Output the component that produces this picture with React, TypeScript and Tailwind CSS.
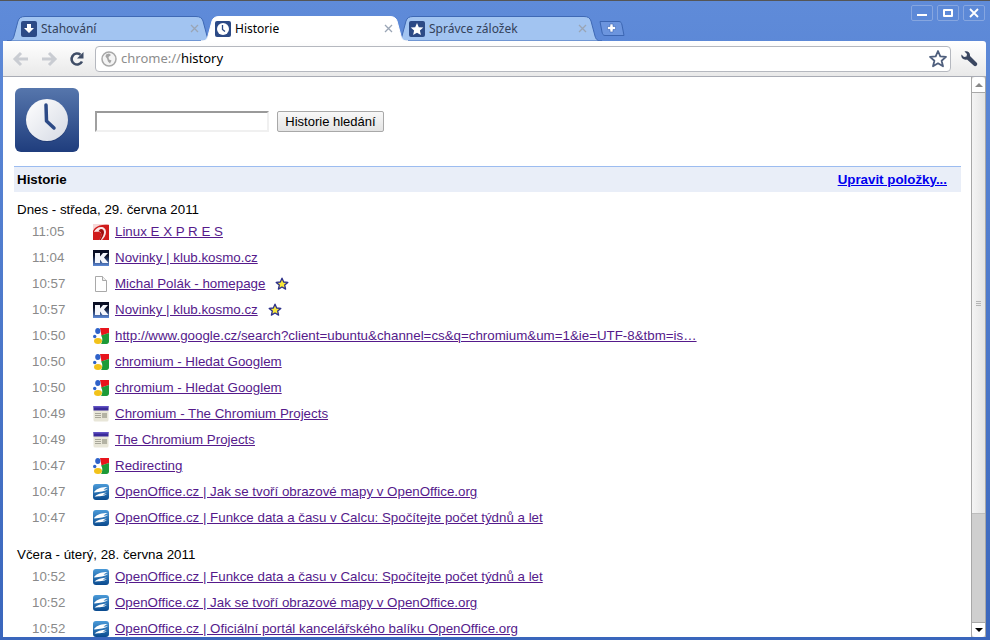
import React from "react";

type Kind = "linux" | "kosmo" | "doc" | "google" | "chromium" | "oo";

const today: { time: string; kind: Kind; title: string; star?: boolean }[] = [
  { time: "11:05", kind: "linux", title: "Linux E X P R E S" },
  { time: "11:04", kind: "kosmo", title: "Novinky | klub.kosmo.cz" },
  { time: "10:57", kind: "doc", title: "Michal Polák - homepage", star: true },
  { time: "10:57", kind: "kosmo", title: "Novinky | klub.kosmo.cz", star: true },
  { time: "10:50", kind: "google", title: "http://www.google.cz/search?client=ubuntu&channel=cs&q=chromium&um=1&ie=UTF-8&tbm=is…" },
  { time: "10:50", kind: "google", title: "chromium - Hledat Googlem" },
  { time: "10:50", kind: "google", title: "chromium - Hledat Googlem" },
  { time: "10:49", kind: "chromium", title: "Chromium - The Chromium Projects" },
  { time: "10:49", kind: "chromium", title: "The Chromium Projects" },
  { time: "10:47", kind: "google", title: "Redirecting" },
  { time: "10:47", kind: "oo", title: "OpenOffice.cz | Jak se tvoří obrazové mapy v OpenOffice.org" },
  { time: "10:47", kind: "oo", title: "OpenOffice.cz | Funkce data a času v Calcu: Spočítejte počet týdnů a let" },
];

const yesterday: typeof today = [
  { time: "10:52", kind: "oo", title: "OpenOffice.cz | Funkce data a času v Calcu: Spočítejte počet týdnů a let" },
  { time: "10:52", kind: "oo", title: "OpenOffice.cz | Jak se tvoří obrazové mapy v OpenOffice.org" },
  { time: "10:52", kind: "oo", title: "OpenOffice.cz | Oficiální portál kancelářského balíku OpenOffice.org" },
];

const Favicon = ({ kind }: { kind: Kind }) => {
  if (kind === "linux")
    return (
      <svg width="16" height="16" viewBox="0 0 16 16" className="shrink-0">
        <rect width="16" height="16" fill="#d01c1c" />
        <path d="M0 0h16v1C11 0 5 1 2 4 1 5 .500 6 0 7z" fill="#f6d8d8" />
        <path d="M1 8c1-3 4-5 7-5 3 0 5 2 5 5 0 3-2 6-4 8H6c2-2 3-5 2-7-1-1.500-4-1.500-7-1z" fill="#fff" opacity="0.9" />
        <path d="M8 5c2 0 3 1.500 3 3.500S9.500 13 8 16H6c2-2 3-5 2-7-.5-1-1.500-1.500-2.500-1.700C6 6 7 5 8 5z" fill="#a01010" />
      </svg>
    );
  if (kind === "kosmo")
    return (
      <svg width="16" height="16" viewBox="0 0 16 16" className="shrink-0">
        <defs>
          <linearGradient id="kos" x1="0" y1="0" x2="0" y2="1">
            <stop offset="0.35" stopColor="#0a0f24" />
            <stop offset="1" stopColor="#5d8ad8" />
          </linearGradient>
        </defs>
        <rect width="16" height="16" fill="url(#kos)" />
        <path d="M2 3h5v3.500L10 3h5l-4 4.500 4.500 5.500H9.500L7 9.500V13H2z" fill="#f4f6fb" />
      </svg>
    );
  if (kind === "doc")
    return (
      <svg width="16" height="16" viewBox="0 0 16 16" className="shrink-0">
        <path d="M2.500 .500h7l4 4v11h-11z" fill="#fff" stroke="#a9a9a9" />
        <path d="M9.500 .500v4h4" fill="#f0f0f0" stroke="#a9a9a9" />
      </svg>
    );
  if (kind === "google")
    return (
      <svg width="16" height="16" viewBox="0 0 16 16" className="shrink-0">
        <path d="M7 0h9v5L8.500 7.500z" fill="#e8141c" />
        <path d="M8 7.500l8-2.500v8.500c0 1.500-1 2.500-2.500 2.500H8c1.500-2 2-6 0-8.500z" fill="#1d9a38" />
        <ellipse cx="4.800" cy="3" rx="2.600" ry="3" fill="#2f62c9" />
        <circle cx="1.700" cy="8.500" r="1.700" fill="#2f62c9" />
        <ellipse cx="5" cy="13" rx="4" ry="3" fill="#f2c21a" />
      </svg>
    );
  if (kind === "chromium")
    return (
      <svg width="16" height="16" viewBox="0 0 16 16" className="shrink-0">
        <rect x="0.500" y="0.500" width="15" height="15" rx="1.500" fill="#e8e6d8" />
        <rect x="0.500" y="0" width="15" height="4.500" fill="#3a2a9a" />
        <rect x="0.500" y="0" width="15" height="1.500" fill="#6152c4" />
        <path d="M2 7h6v1H2zM2 9h6v1H2zM2 11h6v1H2z" fill="#a8a79a" />
        <rect x="9" y="7" width="5" height="5" fill="#b4b3a4" />
      </svg>
    );
  return (
    <svg width="16" height="16" viewBox="0 0 16 16" className="shrink-0">
      <defs>
        <linearGradient id="oo" x1="0" y1="0" x2="0" y2="1">
          <stop offset="0" stopColor="#4a9ad8" />
          <stop offset="1" stopColor="#0a4a8e" />
        </linearGradient>
      </defs>
      <rect width="16" height="16" rx="3" fill="url(#oo)" />
      <path d="M1 8C4 4 9 3 15 3c-2 .6-3.500 1.500-4.500 2.800 1.500 0 3-.3 4.500-1-3 3-8 3-13.500 3.600z" fill="#fff" />
      <path d="M1.500 12.500C4 10 8 9 14 8.500c-1.800.6-3 1.300-4 2.300 1.200 0 2.500-.2 4-.8-3 2.500-7.500 2.200-12.500 2.500z" fill="#fff" />
    </svg>
  );
};

const SmallStar = () => (
  <svg width="14" height="14" viewBox="0 0 14 14" className="ml-[10px] shrink-0">
    <path d="M7 1.200l1.700 3.800 4.100.4-3.100 2.700.9 4-3.600-2.100-3.600 2.100.9-4L1.200 5.400l4.100-.4z" fill="#f8e83a" stroke="#2b2f8a" strokeWidth="1.300" strokeLinejoin="round" />
  </svg>
);

const Row = ({ time, kind, title, star }: (typeof today)[number]) => (
  <div className="flex h-[26px] items-center pl-[29px]">
    <span className="w-[61px] shrink-0 text-[#8a8a8a]">{time}</span>
    <Favicon kind={kind} />
    <a className="ml-[6px] whitespace-nowrap text-[#551a8b] underline">{title}</a>
    {star && <SmallStar />}
  </div>
);

const TabShape = ({ active }: { active?: boolean }) => (
  <svg width="207" height="25" viewBox="0 0 207 25" className="absolute inset-0">
    <path
      d="M0 25C4 25 6 24 7 20L11 5C12 2 14 .500 18 .500H189C193 .500 195 2 196 5L200 20C201 24 203 25 207 25z"
      fill={active ? "#ffffff" : "#a2c4f1"}
      stroke={active ? "#ffffff" : "#3f69b5"}
    />
  </svg>
);

const Tab = ({ title, active, icon, z }: { title: string; active?: boolean; icon: React.ReactNode; z: string }) => (
  <div className={`relative flex h-[25px] w-[207px] shrink-0 items-center pl-[14px] ${z}`}>
    <TabShape active={active} />
    <span className="relative flex h-4 w-4 shrink-0">{icon}</span>
    <span className={`relative ml-[4px] text-[12px] ${active ? "text-black" : "text-[#33415a]"}`}>{title}</span>
    <svg width="9" height="9" viewBox="0 0 9 9" className="absolute left-[183px] top-[8px]">
      <path d="M1 1l7 7M8 1L1 8" stroke="#9aa5b5" strokeWidth="1.300" />
    </svg>
  </div>
);

const TabIconBox = ({ children }: { children: React.ReactNode }) => (
  <svg width="16" height="16" viewBox="0 0 16 16">
    <rect width="16" height="16" rx="2" fill="#2c4a86" />
    {children}
  </svg>
);

const WinButton = ({ children }: { children: React.ReactNode }) => (
  <div className="flex h-4 w-[22px] items-center justify-center rounded-[2px] border border-[#86a6e0] bg-[#5a86d6]/40">
    {children}
  </div>
);

export default function App() {
  return (
    <div
      className="flex h-[640px] w-[990px] flex-col overflow-hidden border-t border-[#555555] bg-gradient-to-b from-[#5f8bd9] to-[#3a66bc] pb-[3px] pl-[3px] pr-[4px] text-[13.33px] text-black"
      style={{ fontFamily: '"Liberation Sans", Arial, sans-serif' }}
    >
      {/* Tab strip */}
      <div className="relative flex h-[40px] shrink-0 items-end pl-[4px]" style={{ fontFamily: '"Noto Sans", sans-serif' }}>
        <Tab
          title="Stahování"
          z="z-10"
          icon={
            <TabIconBox>
              <path d="M6 3h4v4h3l-5 5-5-5h3z" fill="#fff" />
            </TabIconBox>
          }
        />
        <Tab
          title="Historie"
          active
          z="z-20 -ml-[13px]"
          icon={
            <TabIconBox>
              <circle cx="8" cy="8" r="6" fill="#fff" />
              <path d="M7.500 4v4.500l2.500 2" stroke="#2c4a86" strokeWidth="1.300" fill="none" />
            </TabIconBox>
          }
        />
        <Tab
          title="Správce záložek"
          z="z-10 -ml-[13px]"
          icon={
            <TabIconBox>
              <path d="M8 2l1.800 4.200 4.500.4-3.400 3 1 4.400L8 11.700 4.100 14l1-4.400-3.400-3 4.500-.4z" fill="#fff" />
            </TabIconBox>
          }
        />
        <svg width="26" height="15" viewBox="0 0 26 15" className="mb-[5px] -ml-[3px] shrink-0">
          <path d="M1 .500H20C22 .500 22.500 2 23 4L25 14.500H6C4 14.500 3.500 13 3 11z" fill="#6c95de" stroke="#3c66b2" />
          <path d="M11 3h3v2.500h2.500v3H14V11h-3V8.500H8.500v-3H11z" fill="#fff" stroke="#3c66b2" strokeWidth="0.600" />
        </svg>
        <div className="mb-[20px] ml-auto mr-[1px] flex gap-[4px]">
          <WinButton>
            <span className="mt-[4px] h-[2px] w-[10px] bg-white" />
          </WinButton>
          <WinButton>
            <span className="h-[8px] w-[10px] rounded-[1px] border-2 border-white" />
          </WinButton>
          <WinButton>
            <svg width="10" height="10" viewBox="0 0 10 10">
              <path d="M1 1l8 8M9 1L1 9" stroke="#fff" strokeWidth="1.800" />
            </svg>
          </WinButton>
        </div>
      </div>

      {/* Toolbar */}
      <div className="flex h-[36px] shrink-0 items-center rounded-tr-[3px] border-b border-[#a9acb5] bg-gradient-to-b from-[#ffffff] to-[#e9e9e9] pl-[9px]">
        <svg width="18" height="16" viewBox="0 0 18 16" className="shrink-0">
          <path d="M9 2L3 8l6 6M3 8h13" fill="none" stroke="#c9ccd2" strokeWidth="3" />
        </svg>
        <svg width="18" height="16" viewBox="0 0 18 16" className="ml-[10px] shrink-0">
          <path d="M9 2l6 6-6 6M15 8H2" fill="none" stroke="#c9ccd2" strokeWidth="3" />
        </svg>
        <svg width="18" height="18" viewBox="0 0 18 18" className="ml-[10px] shrink-0">
          <path d="M14 11.500A5.500 5.500 0 1 1 12.500 4.700" fill="none" stroke="#3f4d66" strokeWidth="2.600" />
          <path d="M15.500 2v6.500H9z" fill="#3f4d66" />
        </svg>
        <div
          className="ml-[9px] flex h-[26px] w-[856px] shrink-0 items-center rounded-[4px] border border-[#b5b8bf] bg-white pl-[5px] text-[13px]"
          style={{ fontFamily: '"Noto Sans", sans-serif' }}
        >
          <svg width="16" height="16" viewBox="0 0 16 16" className="shrink-0">
            <circle cx="8" cy="8" r="7" fill="#f4f4f4" stroke="#a8a8a8" strokeWidth="1.500" />
            <path d="M5 3.500l3-1 2 1.500-2.500 2 .5 2.500 2.500 1-1.500 3-2-2-1-3-1.500-2z" fill="#a5a5a5" />
          </svg>
          <span className="ml-[4px] text-[#8d8d8d]">chrome://</span>
          <span className="text-black">history</span>
          <svg width="20" height="20" viewBox="0 0 20 20" className="ml-auto mr-[2px] shrink-0">
            <path d="M10 2l2.300 5.400 5.700.5-4.400 3.800 1.400 5.600-5-3-5 3 1.400-5.600L2 7.900l5.700-.5z" fill="#fff" stroke="#4f5f7d" strokeWidth="1.800" strokeLinejoin="round" />
          </svg>
        </div>
        <svg width="18" height="18" viewBox="0 0 18 18" className="ml-[9px] shrink-0">
          <path d="M1.500 4.500L4 7l2.500-.5L7 4 4.500 1.500C7 .500 10 2 10 5c0 .700 0 1 0 1l6.500 6.500c1 1 1 2 .2 3-1 1-2.200.9-3 .1L7 9.500c-3 1-6.500-1.500-5.500-5z" fill="#3a4660" />
        </svg>
      </div>

      {/* Page + scrollbar */}
      <div className="flex min-h-0 flex-1">
        <div className="min-w-0 flex-1 overflow-hidden bg-white">
          <div className="flex h-[90px] items-start pl-[12px] pt-[11px]">
            <svg width="64" height="64" viewBox="0 0 64 64" className="shrink-0">
              <defs>
                <linearGradient id="boxg" x1="0" y1="0" x2="0" y2="1">
                  <stop offset="0" stopColor="#5676ac" />
                  <stop offset="1" stopColor="#1f3d7d" />
                </linearGradient>
                <linearGradient id="faceg" x1="0" y1="0" x2="1" y2="1">
                  <stop offset="0" stopColor="#ffffff" />
                  <stop offset="1" stopColor="#d5dae4" />
                </linearGradient>
              </defs>
              <rect width="64" height="64" rx="6" fill="url(#boxg)" />
              <circle cx="32" cy="33" r="21" fill="#1b3268" opacity="0.5" />
              <circle cx="32" cy="32" r="21" fill="url(#faceg)" />
              <path d="M31 17l.5 16 7.500 7" fill="none" stroke="#2c4a86" strokeWidth="3.500" strokeLinecap="round" strokeLinejoin="round" />
            </svg>
            <input className="ml-[16px] mt-[23px] h-[21px] w-[174px] border-2 border-[#f0f0f0] border-l-[#a0a0a0] border-t-[#9a9a9a] bg-white" />
            <button className="ml-[8px] mt-[23px] h-[21px] w-[107px] rounded-[2px] border border-[#a8a8a8] bg-gradient-to-b from-[#f8f8f8] to-[#e4e4e4] text-[13px] text-black">
              Historie hledání
            </button>
          </div>

          <div className="ml-[11px] mt-[-1px] w-[947px]">
            <div className="flex h-[26px] items-center justify-between border-t border-[#9cbcf0] bg-[#e9eef8] px-[3px] pr-[14px]">
              <span className="font-bold">Historie</span>
              <a className="font-bold text-[#0000ee] underline">Upravit položky...</a>
            </div>
          </div>

          <div className="mt-[9px] pl-[14px]">
            <div className="flex h-[17px] items-center">Dnes - středa, 29. června 2011</div>
            <div className="mt-[1px] -ml-[14px]">
              {today.map((r, i) => (
                <Row key={i} {...r} />
              ))}
            </div>
            <div className="mt-[15px] flex h-[17px] items-center">Včera - úterý, 28. června 2011</div>
            <div className="mt-[1px] -ml-[14px]">
              {yesterday.map((r, i) => (
                <Row key={i} {...r} />
              ))}
            </div>
          </div>
        </div>

        {/* Scrollbar */}
        <div className="flex w-[15px] shrink-0 flex-col border-x border-[#a8a8a8] bg-[#cfcfcf]">
          <div className="flex h-[16px] shrink-0 items-center justify-center rounded-t-[3px] border-b border-[#a8a8a8] bg-white">
            <span className="h-0 w-0 border-x-[4px] border-b-[4px] border-x-transparent border-b-[#888888]" />
          </div>
          <div className="flex h-[421px] shrink-0 flex-col items-center justify-center border-b border-[#bdbdbd] bg-gradient-to-r from-[#f4f4f4] to-[#e4e4e4]">
            <span className="h-[1px] w-[5px] bg-[#b5b5b5]" />
            <span className="mt-[1px] h-[1px] w-[5px] bg-[#b5b5b5]" />
            <span className="mt-[1px] h-[1px] w-[5px] bg-[#b5b5b5]" />
          </div>
          <div className="flex-1" />
          <div className="flex h-[15px] shrink-0 items-center justify-center rounded-b-[3px] border-t border-[#a8a8a8] bg-white">
            <span className="h-0 w-0 border-x-[4px] border-t-[4px] border-x-transparent border-t-black" />
          </div>
        </div>
      </div>
    </div>
  );
}
